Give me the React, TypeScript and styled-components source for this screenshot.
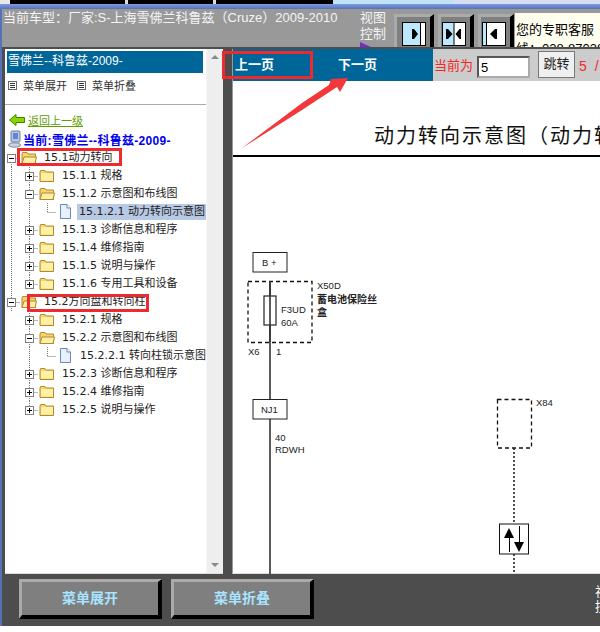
import React from 'react'
import styled, { createGlobalStyle } from 'styled-components'

const FONT = '"Liberation Sans", "Noto Sans CJK SC", sans-serif'
const TREE_FONT = '"DejaVu Sans", "Noto Sans CJK SC", sans-serif'

const GlobalStyle = createGlobalStyle`
  html, body {
    margin: 0;
    padding: 0;
    background: #fff;
  }
  * {
    box-sizing: border-box;
  }
`

type Cell = 'v' | 'l' | 'minus' | 'minusTop' | 'plus' | 'plusEnd' | 'minusMid' | 'none'

type Node = {
  cells: Cell[]
  icon: 'open' | 'closed' | 'doc'
  label: string
  selected?: boolean
  mark?: { left: number; top: number; width: number }
}

const nodes: Node[] = [
  { cells: ['minus'], icon: 'open', label: '15.1动力转向', mark: { left: 15, top: -1, width: 105 } },
  { cells: ['v', 'plus'], icon: 'closed', label: '15.1.1 规格' },
  { cells: ['v', 'minusMid'], icon: 'open', label: '15.1.2 示意图和布线图' },
  { cells: ['v', 'v', 'l'], icon: 'doc', label: '15.1.2.1 动力转向示意图', selected: true },
  { cells: ['v', 'plus'], icon: 'closed', label: '15.1.3 诊断信息和程序' },
  { cells: ['v', 'plus'], icon: 'closed', label: '15.1.4 维修指南' },
  { cells: ['v', 'plus'], icon: 'closed', label: '15.1.5 说明与操作' },
  { cells: ['v', 'plusEnd'], icon: 'closed', label: '15.1.6 专用工具和设备' },
  { cells: ['minusTop'], icon: 'open', label: '15.2方向盘和转向柱', mark: { left: 25, top: 1, width: 122 } },
  { cells: ['none', 'plus'], icon: 'closed', label: '15.2.1 规格' },
  { cells: ['none', 'minusMid'], icon: 'open', label: '15.2.2 示意图和布线图' },
  { cells: ['none', 'v', 'l'], icon: 'doc', label: '15.2.2.1 转向柱锁示意图' },
  { cells: ['none', 'plus'], icon: 'closed', label: '15.2.3 诊断信息和程序' },
  { cells: ['none', 'plus'], icon: 'closed', label: '15.2.4 维修指南' },
  { cells: ['none', 'plusEnd'], icon: 'closed', label: '15.2.5 说明与操作' },
]

const TreeCell = ({ kind }: { kind: Cell }) => {
  const up = kind !== 'minus' && kind !== 'none'
  const down = kind === 'plus' || kind === 'minus' || kind === 'minusTop' || kind === 'minusMid'
  const box = kind !== 'v' && kind !== 'l' && kind !== 'none'
  const plus = kind === 'plus' || kind === 'plusEnd'
  const dots = { stroke: '#777', strokeDasharray: '1 1' }
  return (
    <svg width="18" height="18" viewBox="0 0 18 18" style={{ flex: 'none', display: 'block' }}>
      {up && <line x1="9.5" y1="0" x2="9.5" y2={kind === 'v' ? 18 : 9} {...dots} />}
      {down && <line x1="9.5" y1="9" x2="9.5" y2="18" {...dots} />}
      {kind !== 'v' && kind !== 'none' && <line x1="9.5" y1="9.5" x2="18" y2="9.5" {...dots} />}
      {box && (
        <>
          <rect x="5.5" y="5.5" width="8" height="8" fill="#fff" stroke="#808080" />
          <line x1="7" y1="9.5" x2="12" y2="9.5" stroke="#000" />
          {plus && <line x1="9.5" y1="7" x2="9.5" y2="12" stroke="#000" />}
        </>
      )}
    </svg>
  )
}

const FolderIcon = ({ open }: { open: boolean }) => (
  <svg width="16" height="14" viewBox="0 0 16 14">
    <path d="M1 3 L1.6 1.5 L6 1.5 L7 3 L14.5 3 L14.5 12.5 L1 12.5 Z" fill="#f7d66a" stroke="#b08a2e" />
    {open ? (
      <path d="M1 12.5 L3 6 L15.5 6 L14 12.5 Z" fill="#ffefa8" stroke="#b08a2e" />
    ) : (
      <rect x="2" y="4" width="12" height="7.5" fill="#fff0a6" />
    )}
  </svg>
)

const DocIcon = () => (
  <svg width="13" height="16" viewBox="0 0 13 16">
    <path d="M1.5 .5 H8 L11.5 4 V14.5 H1.5 Z" fill="#e8f0fb" stroke="#6d87b8" />
    <path d="M8 .5 V4 H11.5" fill="#fff" stroke="#6d87b8" />
  </svg>
)

const MenuIcon = () => (
  <svg width="9" height="9" viewBox="0 0 9 9">
    <rect x=".5" y=".5" width="8" height="8" fill="#fff" stroke="#666" />
    <path d="M2 2.5 H7 M2 4.5 H7 M2 6.5 H7" stroke="#333" />
  </svg>
)

const BackIcon = () => (
  <svg width="16" height="12" viewBox="0 0 16 12">
    <path d="M.5 6 L7 .5 V3.5 H15.5 V8.5 H7 V11.5 Z" fill="#8fd400" stroke="#3a8a00" />
  </svg>
)

const ComputerIcon = () => (
  <svg width="14" height="18" viewBox="0 0 14 18">
    <rect x="3" y="1" width="9" height="11" rx="1" fill="#b7c7e6" stroke="#6f7f9f" />
    <rect x="5" y="3" width="5" height="6" fill="#5f86cf" />
    <ellipse cx="6.5" cy="15" rx="6" ry="2.2" fill="#ccd3df" stroke="#7a8699" />
  </svg>
)

const ViewIcon = ({ mode }: { mode: 'right' | 'both' | 'left' }) => (
  <svg width="24" height="24" viewBox="0 0 24 24">
    <rect x=".5" y=".5" width="23" height="23" fill="#fff" stroke="#000" />
    {mode === 'right' && <rect x="1" y="1" width="17" height="22" fill="#bbe8fc" />}
    {mode === 'both' && <rect x="1" y="1" width="11" height="22" fill="#bbe8fc" />}
    {mode === 'left' && <rect x="1" y="1" width="3" height="22" fill="#bbe8fc" />}
    {mode !== 'left' && <line x1={mode === 'both' ? 12 : 18.5} y1="1" x2={mode === 'both' ? 12 : 18.5} y2="23" stroke="#000" />}
    {mode === 'left' && <line x1="4.5" y1="1" x2="4.5" y2="23" stroke="#000" />}
    {mode === 'right' && <path d="M10 7 L12 7 L16 12 L12 17 L10 17 Z" fill="#000" />}
    {mode === 'both' && <path d="M4 7 L6 7 L10.5 12 L6 17 L4 17 Z M19 7 L17.5 7 L13.5 12 L17.5 17 L19 17 Z" fill="#000" />}
    {mode === 'left' && <path d="M15 7 L13 7 L8 12 L13 17 L15 17 Z" fill="#000" />}
  </svg>
)

const Diagram = () => (
  <DiagramSvg viewBox="233 157 367 417">
    <g fontFamily={FONT} fontSize="9.5" fill="#222">
      <line x1="270" y1="281" x2="270" y2="574" stroke="#333" strokeWidth="1.6" />
      <rect x="253" y="252.5" width="34" height="19.5" fill="#fff" stroke="#222" />
      <text x="262" y="265.5">B +</text>
      <rect x="248" y="281.5" width="64" height="61" fill="none" stroke="#111" strokeWidth="1.3" strokeDasharray="4 3" />
      <rect x="264" y="296" width="12" height="29" fill="#fff" stroke="#222" strokeWidth="1.2" />
      <line x1="270" y1="281" x2="270" y2="342" stroke="#333" strokeWidth="1.6" />
      <text x="317" y="289">X50D</text>
      <text x="317" y="303" fontWeight="700" fontSize="10">蓄电池保险丝</text>
      <text x="317" y="316" fontWeight="700" fontSize="10">盒</text>
      <text x="281" y="313">F3UD</text>
      <text x="281" y="326">60A</text>
      <text x="248" y="355">X6</text>
      <text x="276" y="355">1</text>
      <rect x="253" y="399.5" width="34" height="19.5" fill="#fff" stroke="#222" />
      <text x="261" y="413">NJ1</text>
      <text x="275" y="441">40</text>
      <text x="275" y="453">RDWH</text>
      <rect x="497.5" y="399.5" width="34" height="48.5" fill="none" stroke="#111" strokeWidth="1.3" strokeDasharray="4 3" />
      <text x="536" y="406">X84</text>
      <line x1="514" y1="448" x2="514" y2="524" stroke="#222" strokeWidth="1.6" strokeDasharray="2 2" />
      <rect x="499.5" y="524" width="29" height="30" fill="#fff" stroke="#111" />
      <path d="M509 528 L514 538 L504 538 Z" fill="#000" />
      <line x1="509.5" y1="536" x2="509.5" y2="552" stroke="#000" />
      <path d="M519 552 L524 542 L514 542 Z" fill="#000" />
      <line x1="519.5" y1="526" x2="519.5" y2="544" stroke="#000" />
      <line x1="514" y1="554" x2="514" y2="574" stroke="#222" strokeWidth="1.6" strokeDasharray="2 2" />
    </g>
  </DiagramSvg>
)

export default function App() {
  return (
    <>
      <GlobalStyle />
      <Page>
        <TopStrip>
          <TopTab $width={10} $color="#e8e8e8" />
          <TopTab $width={115} $color="#000" />
          <TopTab $width={3} $color="#ddd" />
          <TopTab $width={85} $color="#000" />
          <TopTab $width={3} $color="#ddd" />
          <TopTab $width={117} $color="#000" />
          <TopTab $width={120} $color="#bfe3f5" />
          <TopTab $width={147} $color="#d8def2" />
        </TopStrip>
        <BlueBand />
        <Header>
          <CarTitle>当前车型：厂家:S-上海雪佛兰科鲁兹（Cruze）2009-2010</CarTitle>
          <ViewLabel>
            视图
            <br />
            控制
            <PurpleMark />
          </ViewLabel>
          <ViewButtons>
            <ViewButton>
              <ViewIcon mode="right" />
            </ViewButton>
            <ViewButton>
              <ViewIcon mode="both" />
            </ViewButton>
            <ViewButton>
              <ViewIcon mode="left" />
            </ViewButton>
          </ViewButtons>
          <ServiceBox>
            您的专职客服
            <br />
            线：028-87038
          </ServiceBox>
        </Header>
        <Main>
          <Sidebar>
            <TreeColumn>
              <SideTitle>雪佛兰--科鲁兹-2009-</SideTitle>
              <MenuRow>
                <MenuItem>
                  <MenuIcon />
                  菜单展开
                </MenuItem>
                <MenuItem>
                  <MenuIcon />
                  菜单折叠
                </MenuItem>
              </MenuRow>
              <BackRow>
                <BackIcon />
                <BackLink>返回上一级</BackLink>
              </BackRow>
              <CurrentRow>
                <ComputerIcon />
                <CurrentText>当前:雪佛兰--科鲁兹-2009-</CurrentText>
              </CurrentRow>
              {nodes.map(node => (
                <TreeRow key={node.label}>
                  {node.cells.map((kind, i) => (
                    <TreeCell key={i} kind={kind} />
                  ))}
                  <IconSlot>
                    {node.icon === 'doc' ? <DocIcon /> : <FolderIcon open={node.icon === 'open'} />}
                  </IconSlot>
                  <TreeLabel $selected={node.selected}>{node.label}</TreeLabel>
                  {node.mark && <TreeMark $left={node.mark.left} $top={node.mark.top} $width={node.mark.width} />}
                </TreeRow>
              ))}
            </TreeColumn>
            <Scrollbar>
              <ScrollUp />
              <ScrollDown />
            </Scrollbar>
          </Sidebar>
          <Content>
            <PagerBar>
              <PagerNav>
                <PagerLink>上一页</PagerLink>
                <PagerLink>下一页</PagerLink>
                <PagerMark />
              </PagerNav>
              <PagerForm>
                <PagerCurrent>当前为</PagerCurrent>
                <PageInput readOnly value="5" />
                <JumpButton>跳转</JumpButton>
                <PageCount>5 / 4</PageCount>
              </PagerForm>
            </PagerBar>
            <ContentTitle>动力转向示意图（动力转向）</ContentTitle>
            <Diagram />
          </Content>
        </Main>
        <Footer>
          <FooterButton>菜单展开</FooterButton>
          <FooterButton>菜单折叠</FooterButton>
          <FooterLabel>
            视图
            <br />
            控制
          </FooterLabel>
        </Footer>
        <Arrow viewBox="0 0 600 632">
          <path d="M242 148 L302 103 L329 85 L331 79 L348 78 L340 92 L337 87 L302 110 Z" fill="#f2383a" />
        </Arrow>
      </Page>
    </>
  )
}

const Page = styled.div`
  position: relative;
  width: 600px;
  height: 632px;
  overflow: hidden;
  font-family: ${FONT};
  font-size: 12px;
`

const TopStrip = styled.div`
  display: flex;
  height: 4px;
`

const TopTab = styled.div<{ $width: number; $color: string }>`
  width: ${p => p.$width}px;
  background: ${p => p.$color};
`

const BlueBand = styled.div`
  height: 5px;
  background: linear-gradient(#7f9be0, #5572b8);
`

const Header = styled.div`
  display: flex;
  height: 38px;
  margin-left: 2px;
  background: #999;
  border-left: 0;
  box-shadow: -2px 0 0 #5572b8;
`

const CarTitle = styled.div`
  flex: none;
  width: 358px;
  padding-left: 1px;
  line-height: 17px;
  font-size: 13px;
  color: #f4f4f4;
  white-space: nowrap;
`

const ViewLabel = styled.div`
  position: relative;
  flex: none;
  width: 34px;
  line-height: 16px;
  padding-top: 1px;
  font-size: 13px;
  color: #f4f4f4;
`

const PurpleMark = styled.span`
  position: absolute;
  left: 0;
  bottom: 0;
  border-left: 11px solid #7a2bd0;
  border-top: 5px solid transparent;
`

const ViewButtons = styled.div`
  display: flex;
  flex: none;
  align-items: flex-end;
  gap: 4px;
`

const ViewButton = styled.div`
  display: flex;
  align-items: flex-end;
  width: 36px;
  height: 33px;
  padding: 0 0 1px 1px;
  background: #808080;
  border-top: 3px solid #aaa;
  border-left: 3px solid #aaa;
  border-right: 4px solid #000;

  &:first-child {
    width: 40px;
    padding-left: 5px;
  }
`

const ServiceBox = styled.div`
  flex: 1;
  margin: 4px 0 0 1px;
  padding: 7px 0 0 1px;
  background: #fffff0;
  font-size: 13px;
  line-height: 19px;
  color: #000;
  white-space: nowrap;
  overflow: hidden;
`

const Main = styled.div`
  display: flex;
  height: 528px;
  margin-left: 2px;
  padding: 2px 0 1px 3px;
  gap: 9px;
  background: #4d4d4d;
  box-shadow: -2px 0 0 #5572b8;
`

const Sidebar = styled.div`
  display: flex;
  flex: none;
  width: 218px;
  background: #fff;
  border-bottom: 1px solid #ddd;
`

const TreeColumn = styled.div`
  flex: none;
  width: 201px;
  overflow: hidden;
  padding: 2px 0 0 2px;
`

const SideTitle = styled.div`
  width: 196px;
  height: 22px;
  line-height: 20px;
  padding-left: 1px;
  background: #006699;
  color: #fff;
  white-space: nowrap;
`

const MenuRow = styled.div`
  display: flex;
  gap: 10px;
  height: 29px;
  margin: 3px -2px 0;
  padding: 0 0 0 3px;
  border-bottom: 1px solid #aaa;
  font-size: 11px;
`

const MenuItem = styled.div`
  display: flex;
  align-items: center;
  align-self: flex-start;
  gap: 6px;
  height: 18px;
  color: #333;
`

const BackRow = styled.div`
  display: flex;
  align-items: center;
  gap: 3px;
  height: 19px;
  margin-top: 5px;
  padding-left: 2px;
  font-size: 11px;
`

const BackLink = styled.span`
  color: #5f9e00;
  text-decoration: underline;
`

const CurrentRow = styled.div`
  display: flex;
  align-items: center;
  gap: 1px;
  height: 20px;
  padding-left: 1px;
`

const CurrentText = styled.span`
  color: #0000ee;
  font-weight: 700;
  letter-spacing: 0.3px;
  white-space: nowrap;
`

const TreeRow = styled.div`
  position: relative;
  display: flex;
  align-items: center;
  height: 18px;
  margin-left: -5px;
  font-family: ${TREE_FONT};
  font-size: 11px;
  white-space: nowrap;
`

const IconSlot = styled.span`
  display: flex;
  flex: none;
  align-items: center;
  justify-content: center;
  width: 18px;
  height: 18px;
`

const TreeLabel = styled.span<{ $selected?: boolean }>`
  flex: none;
  margin-left: ${p => (p.$selected ? 3 : 6)}px;
  padding: ${p => (p.$selected ? '0 2px' : '0')};
  line-height: 16px;
  color: #222;
  background: ${p => (p.$selected ? '#b7c9e4' : 'transparent')};
`

const TreeMark = styled.span<{ $left: number; $top: number; $width: number }>`
  position: absolute;
  top: ${p => p.$top}px;
  left: ${p => p.$left}px;
  width: ${p => p.$width}px;
  height: 18px;
  border: 3px solid #ee2a2e;
`

const Scrollbar = styled.div`
  display: flex;
  flex-direction: column;
  justify-content: space-between;
  width: 17px;
  padding: 6px 0;
  background: #eeeeee;
  border-left: 1px solid #f6f6f6;
`

const ScrollUp = styled.span`
  align-self: center;
  border-left: 4px solid transparent;
  border-right: 4px solid transparent;
  border-bottom: 4px solid #888;
`

const ScrollDown = styled.span`
  align-self: center;
  border-left: 4px solid transparent;
  border-right: 4px solid transparent;
  border-top: 4px solid #888;
`

const Content = styled.div`
  flex: 1;
  display: flex;
  flex-direction: column;
  min-width: 0;
  background: #fff;
  border-left: 1px solid #999;
  border-bottom: 1px solid #ddd;
`

const PagerBar = styled.div`
  display: flex;
  flex: none;
  height: 32px;
  background: #006699;
`

const PagerNav = styled.div`
  position: relative;
  display: flex;
  flex: none;
  gap: 64px;
  width: 200px;
  padding: 7px 0 0 2px;
  font-size: 13px;
  font-weight: 700;
  color: #fff;
`

const PagerLink = styled.span`
  line-height: 18px;
`

const PagerMark = styled.span`
  position: absolute;
  top: 2px;
  left: -11px;
  width: 91px;
  height: 28px;
  border: 3px solid #ee2a2e;
`

const PagerForm = styled.div`
  flex: 1;
  display: flex;
  align-items: flex-start;
  min-width: 0;
  overflow: hidden;
  background: #ccc;
  padding-left: 1px;
  white-space: nowrap;
`

const PagerCurrent = styled.span`
  flex: none;
  margin-top: 8px;
  font-size: 13px;
  line-height: 18px;
  color: #f02828;
`

const PageInput = styled.input`
  flex: none;
  width: 53px;
  height: 22px;
  margin: 7px 0 0 4px;
  padding: 0 2px;
  border: 2px inset #aaa;
  font: 13px ${FONT};
  color: #000;
`

const JumpButton = styled.div`
  flex: none;
  width: 37px;
  height: 27px;
  margin: 2px 0 0 8px;
  line-height: 23px;
  text-align: center;
  font-size: 13px;
  color: #222;
  background: #f0f0f0;
  border: 1px solid #777;
`

const PageCount = styled.span`
  flex: none;
  margin: 9px 0 0 4px;
  font-size: 14px;
  letter-spacing: 2px;
  color: #f02828;
`

const ContentTitle = styled.div`
  flex: none;
  height: 76px;
  padding: 41px 0 0 141px;
  line-height: 28px;
  font-size: 20px;
  letter-spacing: 2px;
  white-space: nowrap;
  color: #111;
  border-bottom: 2px solid #000;
`

const DiagramSvg = styled.svg`
  display: block;
  flex: none;
  width: 367px;
  height: 417px;
`

const Footer = styled.div`
  display: flex;
  gap: 9px;
  height: 51px;
  margin-left: 2px;
  padding: 4px 0 0 17px;
  background: #4d4d4d;
  box-shadow: -2px 0 0 #5572b8;
  white-space: nowrap;
`

const FooterButton = styled.div`
  flex: none;
  width: 143px;
  height: 40px;
  line-height: 33px;
  text-align: center;
  font-size: 14px;
  font-weight: 700;
  color: #a8e4ff;
  background: #7f7f7f;
  border-top: 3px solid #aaa;
  border-left: 3px solid #aaa;
  border-right: 4px solid #000;
  border-bottom: 4px solid #000;
`

const FooterLabel = styled.div`
  flex: none;
  margin: 5px 0 0 272px;
  line-height: 15px;
  font-size: 13px;
  color: #fff;
`

const Arrow = styled.svg`
  position: absolute;
  inset: 0;
  width: 600px;
  height: 632px;
  pointer-events: none;
`
